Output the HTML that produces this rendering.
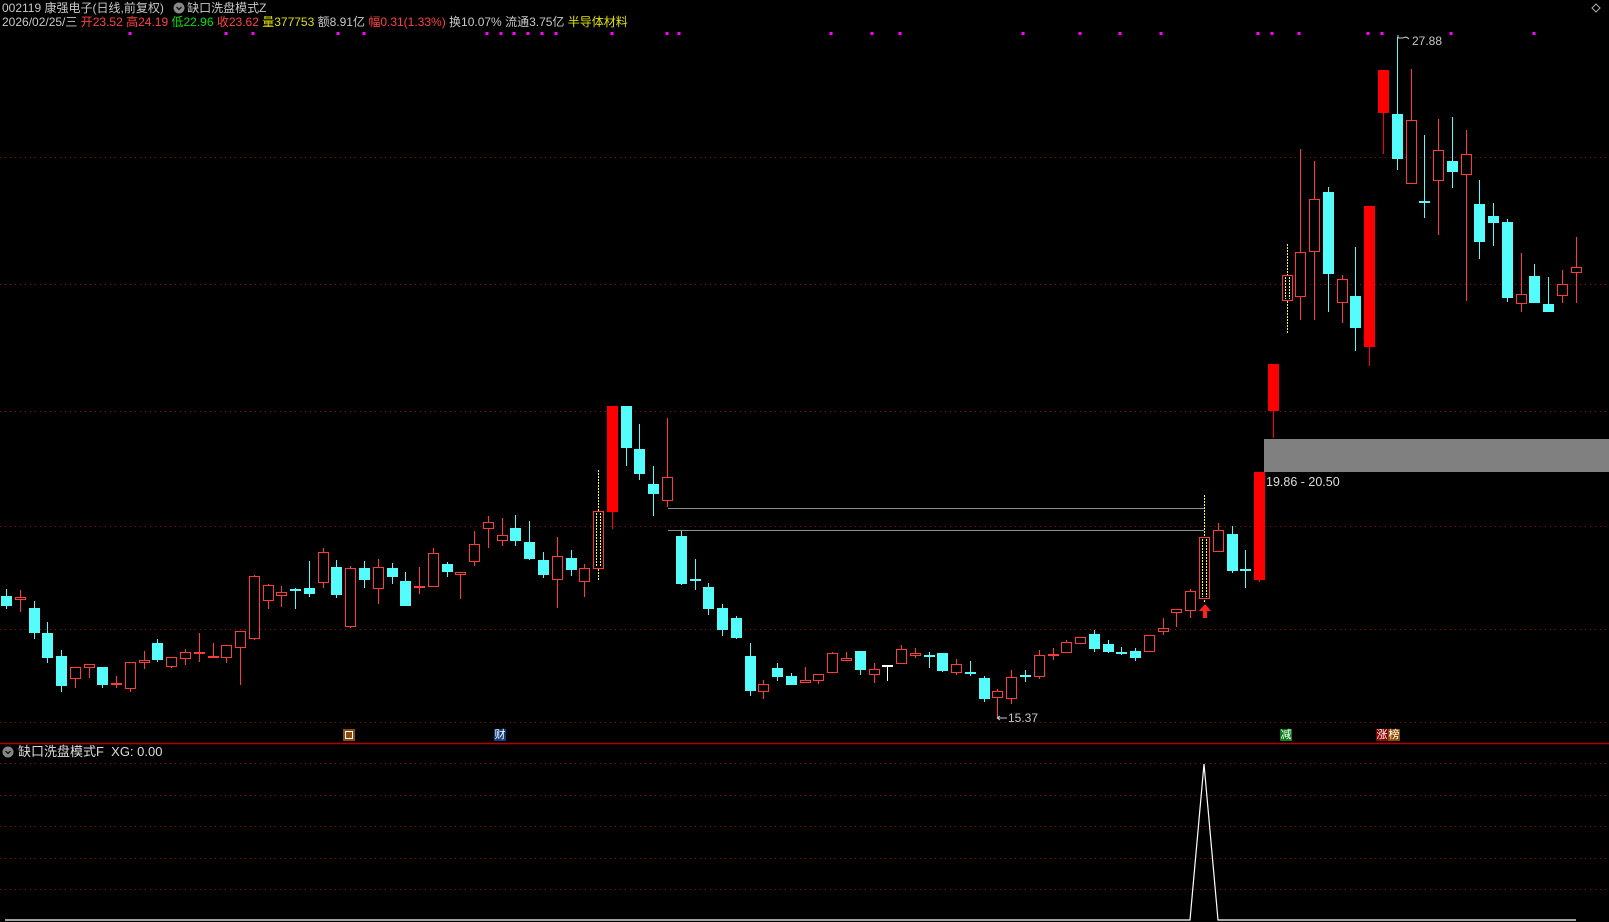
<!DOCTYPE html>
<html><head><meta charset="utf-8"><style>
html,body{margin:0;padding:0;background:#000;width:1609px;height:922px;overflow:hidden}
body{position:relative;font-family:"Liberation Sans","Noto Sans CJK SC",sans-serif}
.t{position:absolute;white-space:nowrap;font-size:12px;line-height:14px;color:#c8c8c8}
.rd{color:#ff4040}.gr{color:#00e000}.yl{color:#e0e000}
.mk{position:absolute;top:729px;width:12px;height:12px;font-size:11px;line-height:12px;text-align:center;color:#fff}
svg{position:absolute;left:0;top:0}
</style></head><body>
<svg id="s" width="1609" height="922" xmlns="http://www.w3.org/2000/svg">
<g stroke="#a00000" stroke-width="1" stroke-dasharray="1,4">
<line x1="0" x2="1609" y1="157.5" y2="157.5"/><line x1="0" x2="1609" y1="284.5" y2="284.5"/>
<line x1="0" x2="1609" y1="411.5" y2="411.5"/><line x1="0" x2="1609" y1="526.5" y2="526.5"/>
<line x1="0" x2="1609" y1="629.5" y2="629.5"/><line x1="0" x2="1609" y1="722.5" y2="722.5"/>
<line x1="0" x2="1609" y1="763.5" y2="763.5"/><line x1="0" x2="1609" y1="795.5" y2="795.5"/>
<line x1="0" x2="1609" y1="826.5" y2="826.5"/><line x1="0" x2="1609" y1="858.5" y2="858.5"/>
<line x1="0" x2="1609" y1="889.5" y2="889.5"/>
</g>
<line x1="0" x2="1609" y1="743.5" y2="743.5" stroke="#b00000" stroke-width="1.5"/>
<rect x="1264" y="439" width="345" height="33" fill="#808080"/>
<line x1="668" x2="1204" y1="508.5" y2="508.5" stroke="#909090"/>
<line x1="668" x2="1204" y1="530.5" y2="530.5" stroke="#909090"/>
<g id="cd"></g>
<polygon points="1205,604 1199,611 1203,611 1203,618 1207,618 1207,611 1211,611" fill="#ff2020"/>
<polyline points="5,920 1190,920 1204,764 1218,920 1576,920" fill="none" stroke="#fff" stroke-width="1.2"/>
<g fill="#ff00ff" id="dots"></g>
<path d="M1592,8 l4,-4 4,4 -4,4z" fill="none" stroke="#aaa"/>
<circle cx="179" cy="8" r="5.5" fill="#888"/><path d="M176.5,7 l2.5,2.5 2.5,-2.5" stroke="#111" fill="none" stroke-width="1.3"/>
<circle cx="8" cy="752" r="5.5" fill="#888"/><path d="M5.5,751 l2.5,2.5 2.5,-2.5" stroke="#111" fill="none" stroke-width="1.3"/>
<path d="M997,718 h10 M997,718 l3,-2 M997,718 l3,2" stroke="#ccc" fill="none"/>
<path d="M1398,38 h5 M1398,38 v-3 M1403,38 q3,-2 6,1" stroke="#ccc" fill="none"/>
</svg>
<div class="t" style="left:2px;top:1px">002119 康强电子(日线,前复权) <span style="margin-left:20px">缺口洗盘模式Z</span></div>
<div class="t" style="left:2px;top:15px">2026/02/25/三 <span class="rd">开23.52 高24.19 </span><span class="gr">低22.96 </span><span class="rd">收23.62 </span><span class="yl">量377753 </span>额8.91亿 <span class="rd">幅0.31(1.33%) </span>换10.07% 流通3.75亿 <span class="yl">半导体材料</span></div>
<div class="t" style="left:1412px;top:34px;font-size:12px">27.88</div>
<div class="t" style="left:1008px;top:711px;font-size:12px">15.37</div>
<div class="t" style="left:1266px;top:475px;font-size:12.5px;color:#ddd">19.86 - 20.50</div>
<div class="t" style="left:18px;top:745px;font-size:13px;color:#ddd">缺口洗盘模式F&nbsp; XG: 0.00</div>
<div class="mk" style="left:343px;background:#8b4a10;border:0"><div style="margin:2px;width:6px;height:6px;border:1px solid #fff"></div></div>
<div class="mk" style="left:494px;background:#103d7a">财</div>
<div class="mk" style="left:1280px;background:#0a7a1a">减</div>
<div class="mk" style="left:1376px;background:#8b0000">涨</div>
<div class="mk" style="left:1388px;background:#8b4a00">榜</div>
<script>
var D=[[0,'c',596,606,589,609],[1,'r',597,600,590,612],[2,'c',608,633,601,639],[3,'c',633,658,622,663],[4,'c',656,686,650,692],[5,'r',667,679,667,688],[6,'r',664,668,664,678],[7,'c',667,685,667,688],[8,'r',683,685,676,688],[9,'r',662,689,662,692],[10,'r',660,663,651,669],[11,'c',643,660,639,662],[12,'r',657,667,657,668],[13,'r',652,659,649,665],[14,'rd',653,653,633,662],[15,'rd',657,657,643,657],[16,'r',645,658,645,663],[17,'r',631,648,631,685],[18,'r',576,639,575,640],[19,'r',585,601,584,609],[20,'r',592,596,586,607],[21,'cd',590,590,588,609],[22,'c',588,594,561,597],[23,'r',552,583,548,588],[24,'c',567,595,560,598],[25,'r',568,627,566,628],[26,'c',568,580,561,588],[27,'r',567,589,559,604],[28,'c',568,577,563,584],[29,'c',581,606,572,606],[30,'r',586,588,567,594],[31,'r',553,587,548,587],[32,'c',564,572,562,577],[33,'r',572,575,572,599],[34,'r',544,562,531,566],[35,'r',522,529,516,548],[36,'r',535,541,518,546],[37,'c',528,541,515,546],[38,'c',542,559,521,560],[39,'c',560,575,552,578],[40,'r',556,580,537,608],[41,'c',558,570,550,576],[42,'r',568,582,564,597],[43,'y',511,569,470,581],[44,'R',406,512,406,529],[45,'c',406,448,406,466],[46,'c',449,474,424,480],[47,'c',484,494,466,516],[48,'r',477,501,418,507],[49,'c',536,584,531,585],[50,'cd',580,580,559,590],[51,'c',587,609,583,615],[52,'c',608,630,604,636],[53,'c',618,638,616,639],[54,'c',656,691,643,696],[55,'r',684,692,680,699],[56,'c',668,677,663,681],[57,'c',676,685,673,685],[58,'r',680,683,667,683],[59,'r',674,681,674,684],[60,'r',653,673,652,673],[61,'r',658,661,652,661],[62,'c',651,670,651,675],[63,'r',669,675,663,683],[64,'wd',666,666,666,681],[65,'r',649,664,645,664],[66,'r',653,656,648,658],[67,'cd',656,656,652,668],[68,'c',653,671,653,672],[69,'r',664,673,659,675],[70,'cd',673,673,661,676],[71,'c',678,699,676,702],[72,'r',691,698,689,718],[73,'r',677,699,670,704],[74,'cd',676,676,670,682],[75,'r',655,677,650,679],[76,'rd',655,655,648,660],[77,'r',642,653,640,653],[78,'r',637,644,637,644],[79,'c',634,649,630,652],[80,'c',644,652,640,653],[81,'cd',653,653,647,655],[82,'c',651,658,648,661],[83,'r',635,652,635,652],[84,'r',628,632,618,635],[85,'r',609,613,609,627],[86,'r',591,611,589,618],[87,'y',537,599,495,603],[88,'r',530,552,523,552],[89,'c',534,571,526,573],[90,'cd',570,570,550,588],[91,'R',472,580,472,582],[92,'R',364,411,364,438],[93,'y',275,301,244,334],[94,'r',252,297,149,320],[95,'r',199,252,161,320],[96,'c',192,274,187,312],[97,'r',279,303,275,323],[98,'c',296,328,247,351],[99,'R',206,347,206,366],[100,'R',70,113,70,154],[101,'c',114,159,37,170],[102,'r',120,184,69,184],[103,'cd',202,202,135,218],[104,'r',150,181,119,235],[105,'c',161,172,117,188],[106,'r',154,175,130,301],[107,'c',204,242,180,259],[108,'c',216,223,203,246],[109,'c',222,298,219,302],[110,'r',294,304,253,312],[111,'c',276,303,264,303],[112,'c',304,312,277,312],[113,'r',284,296,270,303],[114,'r',267,273,237,303]];
var h='';var CY='#54fcfc',RD='#ff3a3a';
D.forEach(function(d){var c=Math.round(6+d[0]*13.77)+0.5,t=d[1],a=d[2],b=d[3],hi=d[4],lo=d[5];
if(t=='c'){h+='<line x1="'+c+'" x2="'+c+'" y1="'+hi+'" y2="'+lo+'" stroke="'+CY+'"/><rect x="'+(c-5.5)+'" y="'+a+'" width="11" height="'+Math.max(b-a,1)+'" fill="'+CY+'"/>';}
else if(t=='cd'||t=='rd'||t=='wd'){var col=t=='cd'?CY:(t=='rd'?RD:'#fff');h+='<line x1="'+c+'" x2="'+c+'" y1="'+hi+'" y2="'+lo+'" stroke="'+col+'"/><rect x="'+(c-5.5)+'" y="'+(a-1)+'" width="11" height="2" fill="'+col+'"/>';}
else if(t=='R'){h+='<line x1="'+c+'" x2="'+c+'" y1="'+hi+'" y2="'+lo+'" stroke="#ff0000"/><rect x="'+(c-5.5)+'" y="'+a+'" width="11" height="'+(b-a)+'" fill="#ff0000"/>';}
else if(t=='r'){h+='<line x1="'+c+'" x2="'+c+'" y1="'+hi+'" y2="'+lo+'" stroke="'+RD+'"/><rect x="'+(c-5)+'" y="'+(a+0.5)+'" width="10" height="'+Math.max(b-a-1,1)+'" fill="#000" stroke="'+RD+'"/>';}
else if(t=='y'){h+='<line x1="'+c+'" x2="'+c+'" y1="'+hi+'" y2="'+lo+'" stroke="#ffff00" stroke-dasharray="2,1"/><rect x="'+(c-5)+'" y="'+(a+0.5)+'" width="10" height="'+(b-a-1)+'" fill="#000" stroke="'+RD+'"/><line x1="'+(c-2)+'" x2="'+(c-2)+'" y1="'+(a+2)+'" y2="'+(b-2)+'" stroke="#ffff00" stroke-dasharray="2,1"/><line x1="'+(c+2)+'" x2="'+(c+2)+'" y1="'+(a+2)+'" y2="'+(b-2)+'" stroke="#ffff00" stroke-dasharray="2,1"/>';}
});
document.getElementById('cd').innerHTML=h;
var xs=[130,226,253,338,364,487,501,514,528,542,556,612,667,679,831,872,900,1023,1080,1120,1161,1258,1272,1299,1368,1382,1451,1534],g='';
xs.forEach(function(x){g+='<rect x="'+(x-1.5)+'" y="32" width="3" height="3"/>';});
document.getElementById('dots').innerHTML=g;
</script>
</body></html>
